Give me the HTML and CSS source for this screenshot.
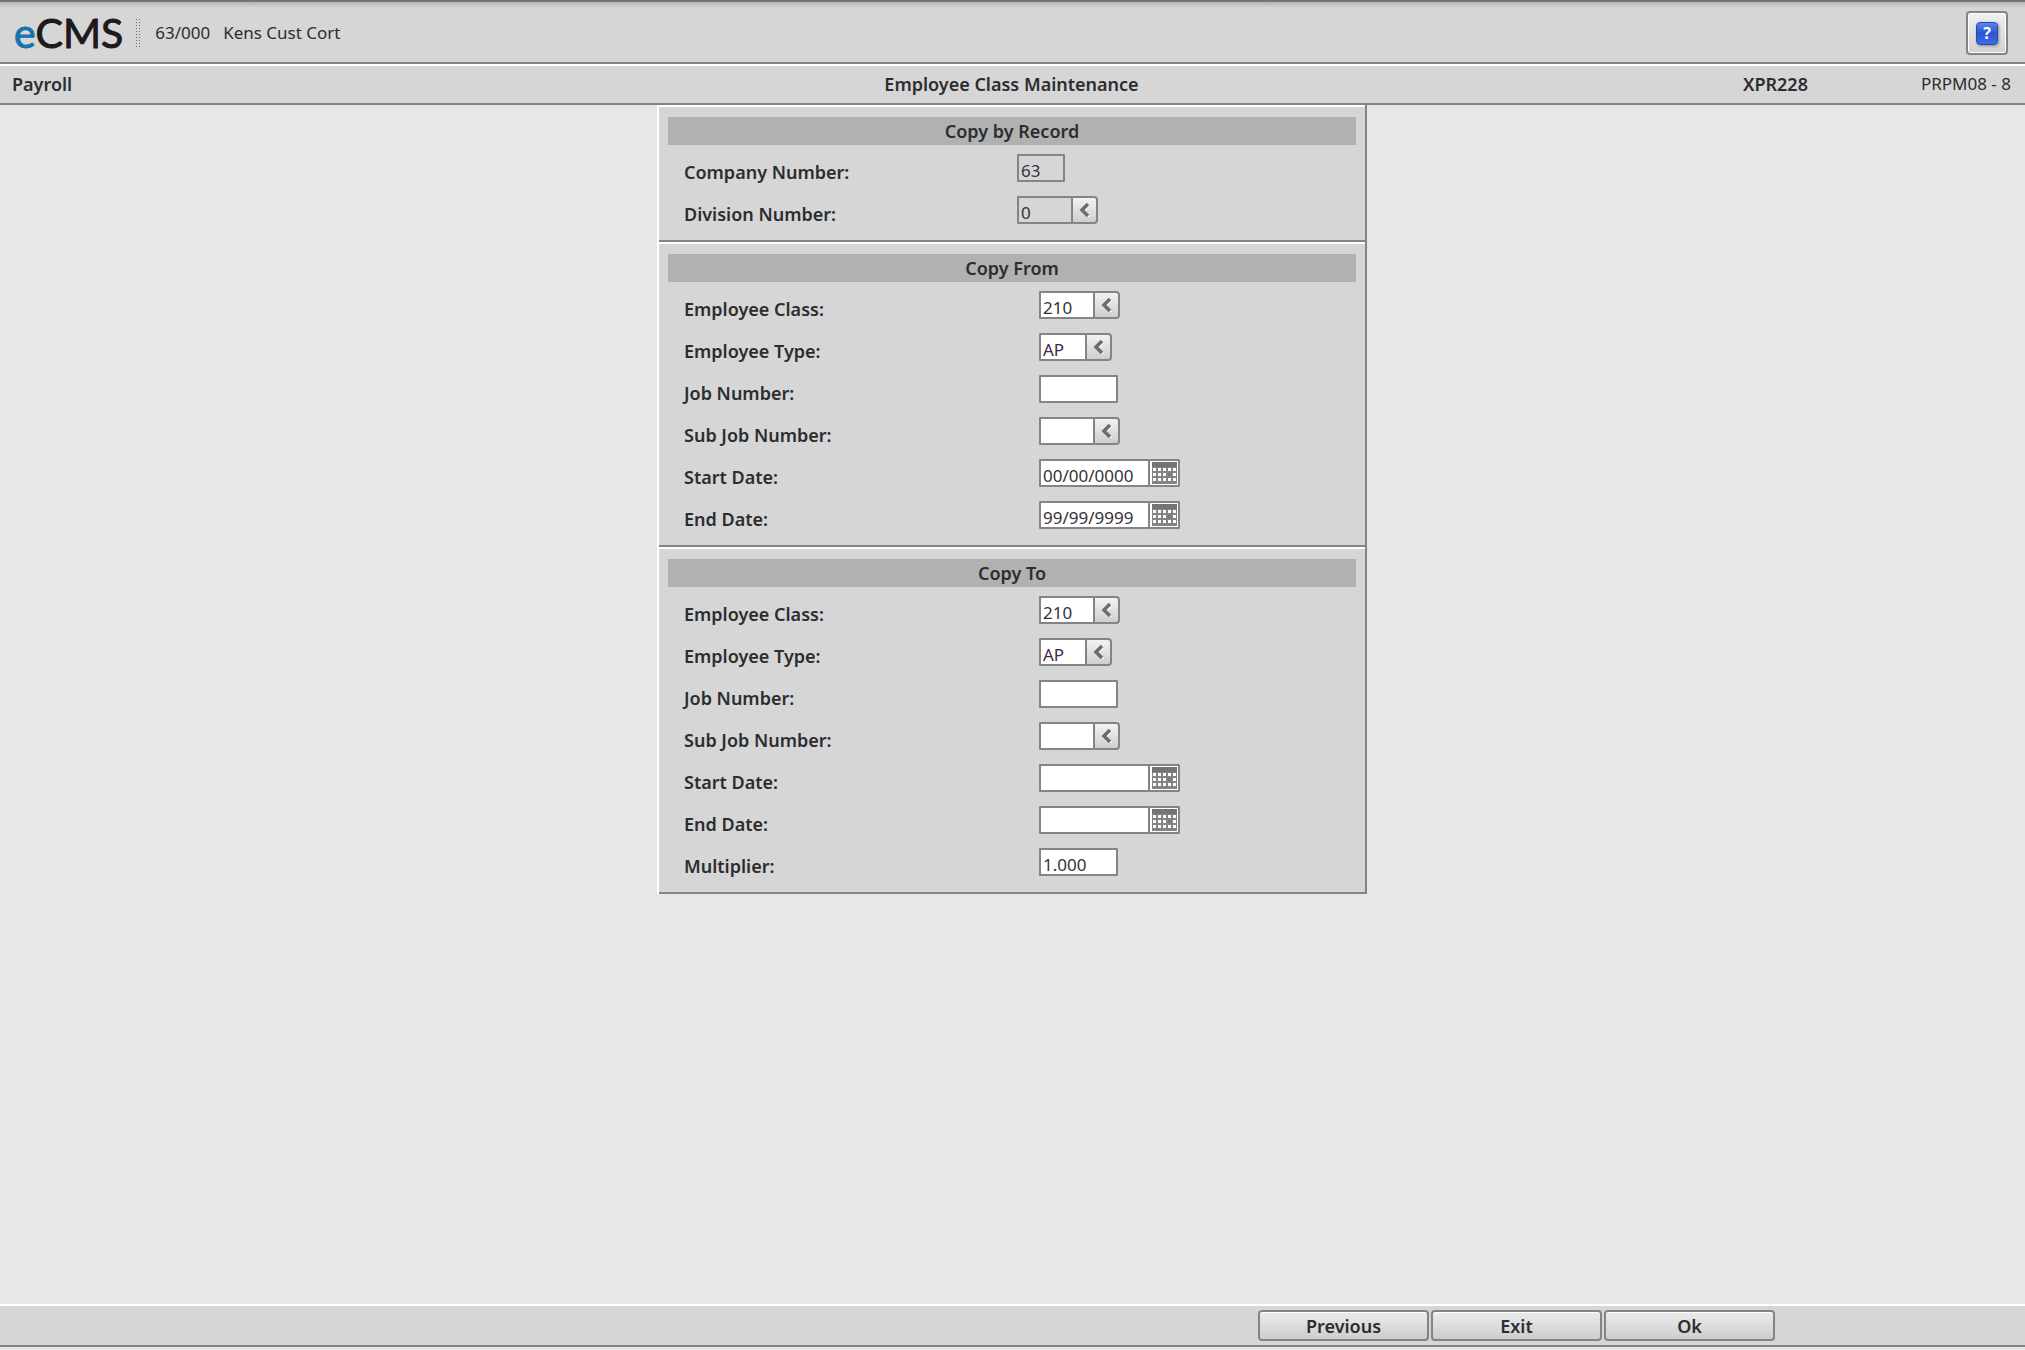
FILE: index.html
```html
<!DOCTYPE html>
<html lang="en">
<head>
<meta charset="utf-8">
<meta name="viewport" content="width=device-width, initial-scale=1">
<title>eCMS - Employee Class Maintenance</title>
<link rel="stylesheet" href="styles.css">
</head>
<body>
<svg class="defs" aria-hidden="true">
  <symbol id="arrow" viewBox="0 0 12 14">
    <path d="M10 2 4 8l6 6" fill="none" stroke="#fff" stroke-width="3"/>
    <path d="M9 1 3 7l6 6" fill="none" stroke="#6c6c6c" stroke-width="3.500"/>
  </symbol>
  <symbol id="calendar" viewBox="0 0 25 22">
    <path fill="#848484" d="M0 0h25v22H0z"/>
    <path fill="#747474" d="M0 0h25v5H0z"/>
    <path stroke="#fff" stroke-width="3" stroke-dasharray="3 2" d="M1 7.500h23M1 12.500h23M1 17.500h23"/>
    <path fill="#777" d="M16 11h3v3h-3z"/>
  </symbol>
</svg>

<header class="topbar">
  <div class="logo"><span class="logo-e">e</span>CMS</div>
  <div class="grip"></div>
  <div class="company"><span>63/000</span><span>Kens Cust Cort</span></div>
  <button class="help" type="button" aria-label="Help"><span class="help-icon">?</span></button>
</header>

<div class="titlebar">
  <strong>Payroll</strong>
  <h1>Employee Class Maintenance</h1>
  <div class="program"><strong>XPR228</strong><span>PRPM08 - 8</span></div>
</div>

<main>
  <form class="panel" id="copy-form">
    <section>
      <h2>Copy by Record</h2>
      <div class="row record"><label for="company">Company Number:</label><input class="w-company" id="company" value="63" readonly></div>
      <div class="row record"><label for="division">Division Number:</label><input class="w-code" id="division" value="0" readonly><button class="lookup" type="button" aria-label="Look up division"><svg><use href="#arrow"/></svg></button></div>
    </section>
    <section>
      <h2>Copy From</h2>
      <div class="row"><label for="f-class">Employee Class:</label><input class="w-code" id="f-class" value="210"><button class="lookup" type="button" aria-label="Look up class"><svg><use href="#arrow"/></svg></button></div>
      <div class="row"><label for="f-type">Employee Type:</label><input class="w-type" id="f-type" value="AP"><button class="lookup" type="button" aria-label="Look up type"><svg><use href="#arrow"/></svg></button></div>
      <div class="row"><label for="f-job">Job Number:</label><input class="w-number" id="f-job"></div>
      <div class="row"><label for="f-sub">Sub Job Number:</label><input class="w-code" id="f-sub"><button class="lookup" type="button" aria-label="Look up sub job"><svg><use href="#arrow"/></svg></button></div>
      <div class="row"><label for="f-start">Start Date:</label><input class="w-date" id="f-start" value="00/00/0000"><button class="pick" type="button" aria-label="Pick start date"><svg><use href="#calendar"/></svg></button></div>
      <div class="row"><label for="f-end">End Date:</label><input class="w-date" id="f-end" value="99/99/9999"><button class="pick" type="button" aria-label="Pick end date"><svg><use href="#calendar"/></svg></button></div>
    </section>
    <section>
      <h2>Copy To</h2>
      <div class="row"><label for="t-class">Employee Class:</label><input class="w-code" id="t-class" value="210"><button class="lookup" type="button" aria-label="Look up class"><svg><use href="#arrow"/></svg></button></div>
      <div class="row"><label for="t-type">Employee Type:</label><input class="w-type" id="t-type" value="AP"><button class="lookup" type="button" aria-label="Look up type"><svg><use href="#arrow"/></svg></button></div>
      <div class="row"><label for="t-job">Job Number:</label><input class="w-number" id="t-job"></div>
      <div class="row"><label for="t-sub">Sub Job Number:</label><input class="w-code" id="t-sub"><button class="lookup" type="button" aria-label="Look up sub job"><svg><use href="#arrow"/></svg></button></div>
      <div class="row"><label for="t-start">Start Date:</label><input class="w-date" id="t-start"><button class="pick" type="button" aria-label="Pick start date"><svg><use href="#calendar"/></svg></button></div>
      <div class="row"><label for="t-end">End Date:</label><input class="w-date" id="t-end"><button class="pick" type="button" aria-label="Pick end date"><svg><use href="#calendar"/></svg></button></div>
      <div class="row"><label for="t-mult">Multiplier:</label><input class="w-number" id="t-mult" value="1.000"></div>
    </section>
  </form>
</main>

<footer class="actions">
  <button type="button">Previous</button>
  <button type="button">Exit</button>
  <button type="submit" form="copy-form">Ok</button>
</footer>
</body>
</html>
```
FILE: styles.css
```css
* { box-sizing: border-box; }

body {
  margin: 0;
  min-height: 100vh;
  display: flex;
  flex-direction: column;
  background: #e7e7e7;
  color: #2b2d30;
  font: 17px/24px "Noto Sans", sans-serif;
}

h1, h2 { margin: 0; }
h1, h2, strong, label, .actions button {
  font-size: 18px;
  line-height: 24px;
  font-weight: 600;
}

button, input { font: inherit; color: inherit; border: 2px solid #848484; }
.defs { display: none; }

.topbar {
  display: flex;
  align-items: center;
  height: 64px;
  padding: 2px 17px 0 14px;
  border-top: 2px solid #757575;
  border-bottom: 2px solid #848484;
  background: linear-gradient(#b4b4b4, #d6d6d6 6px);
}
.logo {
  font: 41px/48px Lato, sans-serif;
  color: #1c1a1b;
  -webkit-text-stroke: 1px currentColor;
}
.logo-e { color: #1673ad; }
.grip {
  width: 6px;
  height: 30px;
  margin: 0 14px 0 12px;
  background: radial-gradient(circle, #6f6f6f 0 1px, transparent 1px) 0 0 / 3px 3px;
}
.company { display: flex; gap: 13px; }
.help {
  display: grid;
  place-items: center;
  width: 42px;
  height: 44px;
  margin-left: auto;
  padding: 0;
  border-radius: 4px;
  background: linear-gradient(#f0f0f0, #d2d2d2);
  box-shadow: inset 0 0 0 1px #fff;
}
.help-icon {
  width: 22px;
  height: 23px;
  border: 1px solid #2448b0;
  border-radius: 4px;
  background: linear-gradient(#5b86ec, #2a55d0 50%, #3f6ce8);
  box-shadow: 1px 1px 3px #888;
  color: #fff;
  font-size: 16px;
  line-height: 21px;
  font-weight: 700;
}

.titlebar {
  display: grid;
  grid-template-columns: 1fr auto 1fr;
  align-items: center;
  height: 41px;
  padding: 0 14px 2px 12px;
  border-top: 2px solid #fff;
  border-bottom: 2px solid #848484;
  background: #d6d6d6;
}
.program { display: flex; justify-content: flex-end; gap: 113px; }

main { flex: 1; display: flex; justify-content: center; align-items: flex-start; }
.panel {
  width: 710px;
  margin-right: 1px;
  border-left: 2px solid #fff;
  border-right: 2px solid #848484;
  background: #d6d6d6;
}
section {
  padding: 10px 9px 11px;
  border-top: 2px solid #fff;
  border-bottom: 2px solid #848484;
}
h2 { height: 28px; line-height: 28px; background: #b1b1b1; text-align: center; }

.row { display: flex; height: 42px; padding: 9px 0 5px 16px; }
label { width: 355px; padding-top: 6px; white-space: nowrap; }
.record label { width: 333px; }
input {
  height: 28px;
  padding: 4px 0 0 2px;
  border-radius: 1px;
  background: #fff;
  color: #3a2f3c;
}
input[readonly] { background: #d6d6d6; }
.w-company { width: 48px; }
.w-type { width: 48px; }
.w-code { width: 56px; }
.w-number { width: 79px; }
.w-date { width: 111px; }

.lookup, .pick {
  display: grid;
  place-items: center;
  height: 28px;
  padding: 0;
  border-left: 0;
}
.lookup {
  width: 25px;
  border-radius: 0 4px 4px 0;
  background: linear-gradient(#f2f2f2, #cecece);
}
.lookup svg { width: 12px; height: 14px; }
.pick { width: 30px; border-radius: 0 2px 2px 0; background: #fff; }
.pick svg { width: 25px; height: 22px; }

.actions {
  display: flex;
  justify-content: flex-end;
  gap: 2px;
  height: 43px;
  margin-bottom: 3px;
  padding: 4px 250px 0 0;
  border-top: 2px solid #fff;
  border-bottom: 2px solid #848484;
  background: #d6d6d6;
}
.actions button {
  width: 171px;
  height: 31px;
  padding: 0;
  border-radius: 4px;
  background: linear-gradient(#ececec, #cdcdcd);
  box-shadow: inset 0 1px 0 #fff;
}
```
